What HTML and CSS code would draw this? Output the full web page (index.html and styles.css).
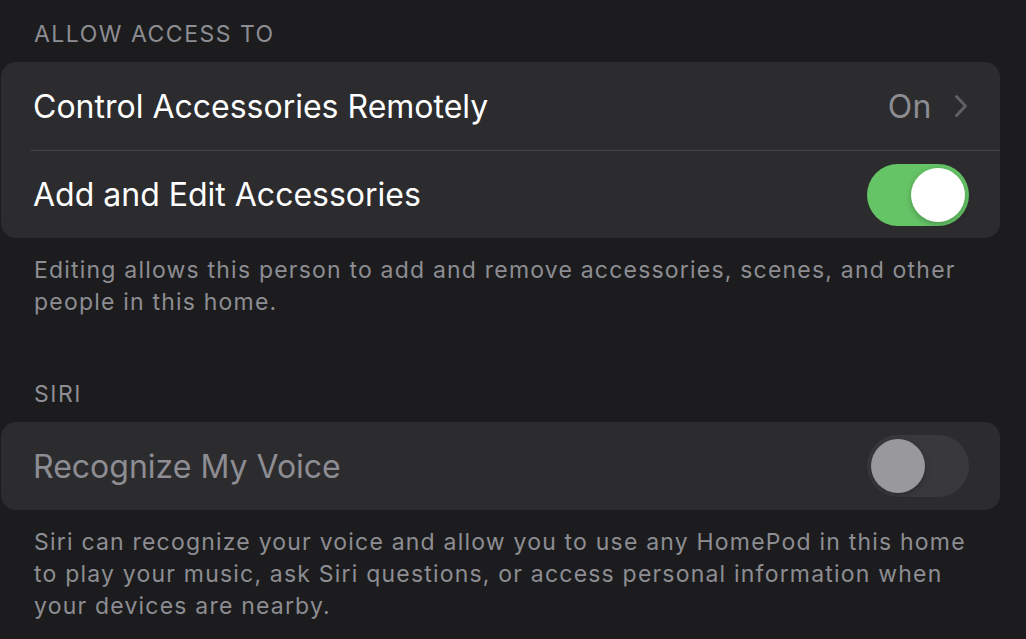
FILE: index.html
```html
<!DOCTYPE html>
<html lang="en">
<head>
    <meta charset="UTF-8">
    <title>Person Settings</title>
    <link rel="stylesheet" href="styles.css">
</head>
<body>
    <div class="page">
        <div class="section-title">ALLOW ACCESS TO</div>
        <div class="group">
            <div class="row">
                <span class="row-label">Control Accessories Remotely</span>
                <span class="row-value">On
                    <svg class="chevron" width="14" height="24" viewBox="0 0 14 24">
                        <path d="M2.5 2.5 L11.5 12 L2.5 21.5" fill="none" stroke="#5f5f64" stroke-width="3" stroke-linecap="round" stroke-linejoin="round"/>
                    </svg>
                </span>
            </div>
            <div class="row">
                <span class="row-label">Add and Edit Accessories</span>
                <span class="switch on"><span class="knob"></span></span>
            </div>
        </div>
        <p class="section-footer">Editing allows this person to add and remove accessories, scenes, and other<br>people in this home.</p>

        <div class="section-title siri">SIRI</div>
        <div class="group">
            <div class="row disabled">
                <span class="row-label">Recognize My Voice</span>
                <span class="switch"><span class="knob"></span></span>
            </div>
        </div>
        <p class="section-footer">Siri can recognize your voice and allow you to use any HomePod in this home<br>to play your music, ask Siri questions, or access personal information when<br>your devices are nearby.</p>
    </div>
</body>
</html>
```

FILE: styles.css
```css
body {
    margin: 0;
    background-color: #1c1c1e;
    font-family: Inter, "Noto Sans", sans-serif;
    color: #ffffff;
}
.page {
    width: 999px;
    padding: 0 0 0 1px;
}
.section-title {
    padding: 21px 0 0 33px;
    height: 62px;
    box-sizing: border-box;
    font-size: 23px;
    line-height: 26px;
    letter-spacing: 1.5px;
    color: #8d8d93;
}
.section-title.siri {
    padding-top: 63px;
    height: 104px;
}
.group {
    background-color: #2c2c2e;
    border-radius: 15px;
    overflow: hidden;
}
.row {
    display: flex;
    align-items: center;
    justify-content: space-between;
    height: 88px;
    margin-left: 30px;
    padding: 0 32px 0 2px;
}
.row + .row {
    border-top: 1px solid #47474b;
    height: 87px;
}
.row-label {
    font-size: 32px;
}
.row.disabled .row-label {
    color: #8d8d93;
}
.row-value {
    display: flex;
    align-items: center;
    gap: 22px;
    font-size: 32px;
    letter-spacing: 0.5px;
    color: #8d8d93;
}
.switch {
    position: relative;
    width: 102px;
    height: 62px;
    margin-right: -1px;
    border-radius: 31px;
    background-color: #39393d;
}
.switch.on {
    background-color: #65c466;
}
.switch .knob {
    position: absolute;
    top: 4px;
    left: 4px;
    width: 54px;
    height: 54px;
    border-radius: 50%;
    background-color: #98989d;
    box-shadow: 0 2px 6px rgba(0, 0, 0, 0.25);
}
.switch.on .knob {
    left: 44px;
    background-color: #ffffff;
}
.section-footer {
    margin: 0;
    padding: 16px 30px 0 33px;
    font-size: 23px;
    line-height: 32px;
    letter-spacing: 1.2px;
    color: #8d8d93;
}
```
